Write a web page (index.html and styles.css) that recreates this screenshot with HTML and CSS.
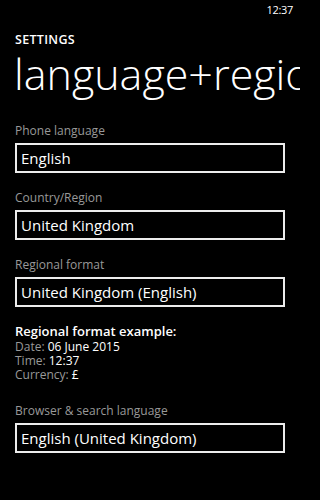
FILE: index.html
```html
<!DOCTYPE html>
<html>
<head>
<meta charset="utf-8">
<link rel="stylesheet" href="styles.css">
</head>
<body>
<div class="phone">
  <div class="status"><span class="clock">12:37</span></div>
  <div class="header">
    <div class="app">SETTINGS</div>
    <div class="title">language+region</div>
  </div>
  <div class="content">
    <div class="field">
      <div class="label">Phone language</div>
      <div class="box">English</div>
    </div>
    <div class="field">
      <div class="label">Country/Region</div>
      <div class="box">United Kingdom</div>
    </div>
    <div class="field">
      <div class="label">Regional format</div>
      <div class="box">United Kingdom (English)</div>
    </div>
    <div class="example">
      <div class="ex-title">Regional format example:</div>
      <div class="ex-line"><span class="dim">Date:</span> 06 June 2015</div>
      <div class="ex-line"><span class="dim">Time:</span> 12:37</div>
      <div class="ex-line"><span class="dim">Currency:</span> £</div>
    </div>
    <div class="field">
      <div class="label">Browser &amp; search language</div>
      <div class="box">English (United Kingdom)</div>
    </div>
  </div>
</div>
</body>
</html>
```
FILE: styles.css
```css
html, body {
  margin: 0;
  padding: 0;
  background: #000;
}
.phone {
  width: 300px;
  height: 500px;
  overflow: hidden;
  background: #000;
  color: #fff;
  font-family: "Open Sans", "Noto Sans", sans-serif;
}
.status {
  height: 20px;
  display: flex;
  justify-content: flex-end;
  align-items: center;
  padding-right: 7px;
}
.clock {
  font-size: 11px;
  color: #fff;
  line-height: 16px;
  letter-spacing: -0.3px;
}
.header {
  padding-left: 15px;
  padding-top: 12px;
}
.app {
  font-size: 12.5px;
  font-weight: 600;
  line-height: 16px;
  letter-spacing: 0.3px;
}
.title {
  font-size: 43px;
  font-weight: 300;
  line-height: 50px;
  margin-top: 1px;
  white-space: nowrap;
  margin-left: -1px;
}
.content {
  padding: 23px 15px 0 15px;
}
.field {
  margin-bottom: 16px;
}
.label {
  font-size: 12px;
  color: #999;
  line-height: 18px;
  margin-bottom: 3px;
}
.box {
  border: 2px solid #ececec;
  height: 26px;
  line-height: 26px;
  padding-left: 4px;
  font-size: 15px;
  color: #fff;
  white-space: nowrap;
}
.example {
  margin-bottom: 20px;
}
.ex-title {
  font-size: 13px;
  font-weight: 600;
  line-height: 17px;
}
.ex-line {
  font-size: 12px;
  line-height: 14px;
}
.dim {
  color: #999;
}
```
